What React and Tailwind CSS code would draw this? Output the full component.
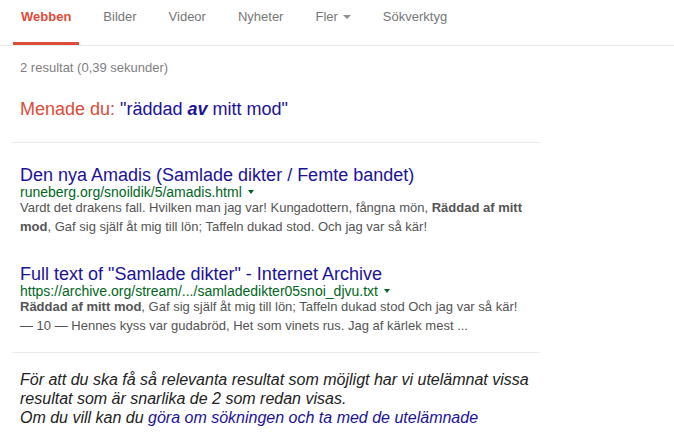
import React from "react";

const F = { fontFamily: '"Liberation Sans", Arial, sans-serif' };

function Tab({ label, active, arrow }) {
  return (
    <div
      className={
        "h-[45px] px-2 pt-[9px] text-[13px] leading-[15px] flex items-start " +
        (active
          ? "border-b-[3px] border-[#dd4b39] text-[#dd4b39] font-bold"
          : "text-[#777777]")
      }
    >
      <span>{label}</span>
      {arrow && (
        <span className="ml-[5px] mt-[6px] w-0 h-0 border-l-[4px] border-r-[4px] border-t-[4px] border-l-transparent border-r-transparent border-t-[#909090]" />
      )}
    </div>
  );
}

function Arrow() {
  return (
    <span className="inline-block ml-[6px] mb-[2px] align-middle w-0 h-0 border-l-[3.5px] border-r-[3.5px] border-t-[4px] border-l-transparent border-r-transparent border-t-[#006621]" />
  );
}

function Result({ title, url, children, className = "" }) {
  return (
    <div className={"pl-2 " + className}>
      <div className="text-[18px] leading-[20px] text-[#1c1299]">{title}</div>
      <div className="text-[14px] leading-[14px] text-[#006621] whitespace-nowrap">
        {url}
        <Arrow />
      </div>
      <div className="text-[13px] leading-[18.5px] text-[#545454] w-[508px]">
        {children}
      </div>
    </div>
  );
}

export default function App() {
  return (
    <div className="w-[674px] h-[432px] bg-white overflow-hidden" style={F}>
      <div className="h-[46px] border-b border-[#ebebeb] flex pl-[13px] gap-4">
        <Tab label="Webben" active />
        <Tab label="Bilder" />
        <Tab label="Videor" />
        <Tab label="Nyheter" />
        <Tab label="Fler" arrow />
        <Tab label="Sökverktyg" />
      </div>

      <div className="ml-[12px] w-[528px]">
        <div className="pl-2 pt-[14px] text-[13px] leading-[15px] text-[#808080]">
          2 resultat (0,39 sekunder)
        </div>
        <div className="pl-2 mt-[23px] text-[18px] leading-[22px]">
          <span className="text-[#dd4b39]">Menade du: </span>
          <span className="text-[#1c1299]">
            "räddad <b className="italic">av</b> mitt mod"
          </span>
        </div>
        <div className="mt-[22px] h-px bg-[#ebebeb]" />

        <Result
          className="mt-[22px]"
          title="Den nya Amadis (Samlade dikter / Femte bandet)"
          url="runeberg.org/snoildik/5/amadis.html"
        >
          Vardt det drakens fall. Hvilken man jag var! Kungadottern, fångna mön,{" "}
          <b>Räddad af mitt mod</b>, Gaf sig själf åt mig till lön; Taffeln
          dukad stod. Och jag var så kär!
        </Result>

        <Result
          className="mt-[28px]"
          title={'Full text of "Samlade dikter" - Internet Archive'}
          url="https://archive.org/stream/.../samladedikter05snoi_djvu.txt"
        >
          <b>Räddad af mitt mod</b>, Gaf sig själf åt mig till lön; Taffeln
          dukad stod Och jag var så kär! — 10 — Hennes kyss var gudabröd, Het
          som vinets rus. Jag af kärlek mest ...
        </Result>

        <div className="mt-[17px] h-px bg-[#ebebeb]" />

        <div className="pl-2 mt-[17px] text-[16px] leading-[19px] italic text-[#222222] whitespace-nowrap">
          För att du ska få så relevanta resultat som möjligt har vi utelämnat
          vissa
          <br />
          resultat som är snarlika de 2 som redan visas.
          <br />
          Om du vill kan du{" "}
          <span className="text-[#1c1299]">
            göra om sökningen och ta med de utelämnade
          </span>
        </div>
      </div>
    </div>
  );
}
